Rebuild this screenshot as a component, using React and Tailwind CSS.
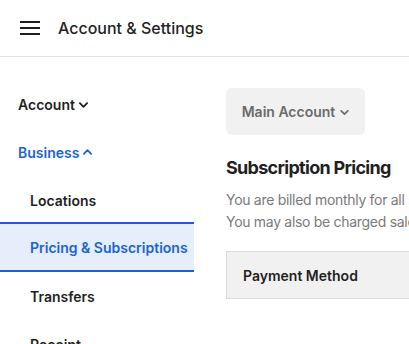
import React from "react";

const Chevron = ({ up, className }) => (
  <svg viewBox="0 0 10 6" className={className} fill="none" stroke="currentColor" strokeWidth="2" strokeLinecap="round" strokeLinejoin="round">
    {up ? <path d="M1 5L5 1L9 5" /> : <path d="M1 1L5 5L9 1" />}
  </svg>
);

export default function App() {
  return (
    <div className="w-[409px] h-[344px] overflow-hidden bg-white text-[#1f1f1f]" style={{ fontFamily: "Inter, 'Noto Sans', sans-serif" }}>
      <header className="h-[57px] border-b border-[#e2e2e2] flex items-center">
        <div className="ml-5 flex flex-col gap-[4px] w-5">
          <span className="block h-[2px] bg-[#1f1f1f]" />
          <span className="block h-[2px] bg-[#1f1f1f]" />
          <span className="block h-[2px] bg-[#1f1f1f]" />
        </div>
        <span className="ml-[18px] text-[16px] font-medium">Account &amp; Settings</span>
      </header>
      <div className="flex">
        <nav className="w-[194px] shrink-0 pt-[23px] text-[14px] font-semibold">
          <div className="h-12 flex items-center pl-[18px] gap-1">
            Account <Chevron className="w-[9px] h-[6px] mt-[1px]" />
          </div>
          <div className="h-12 flex items-center pl-[18px] gap-1 text-[#1a63d6]">
            Business <Chevron up className="w-[9px] h-[6px]" />
          </div>
          <div className="h-12 flex items-center pl-[30px]">Locations</div>
          <div className="h-[50px] -mt-[2px] flex items-center pl-[30px] border-y-2 border-[#1a5dd6] bg-[#e5eefa] text-[#1a63d6] whitespace-nowrap">
            Pricing &amp; Subscriptions
          </div>
          <div className="h-12 flex items-center pl-[30px]">Transfers</div>
          <div className="h-12 flex items-center pl-[30px]">Receipt</div>
        </nav>
        <main className="flex-1 pl-[32px] pt-[31px] min-w-0">
          <div className="w-[139px] h-[47px] rounded-md bg-[#f1f1f1] flex items-center justify-center gap-[5px] text-[14px] font-semibold text-[#6b6b6b]">
            Main Account <Chevron className="w-[9px] h-[5px] mt-[1px]" />
          </div>
          <h2 className="mt-[20px] text-[18px] font-bold tracking-[-0.7px] leading-[26px] whitespace-nowrap">Subscription Pricing</h2>
          <p className="mt-[8px] text-[14px] tracking-[-0.3px] leading-[22px] text-[#7a7a7a] whitespace-nowrap">
            You are billed monthly for all subscriptions.
            <br />
            You may also be charged sales tax.
          </p>
          <div className="mt-[18px] h-[48px] w-[300px] border border-[#dadada] bg-[#f1f1f1] flex items-center pl-4 text-[14px] font-semibold">
            Payment Method
          </div>
        </main>
      </div>
    </div>
  );
}
